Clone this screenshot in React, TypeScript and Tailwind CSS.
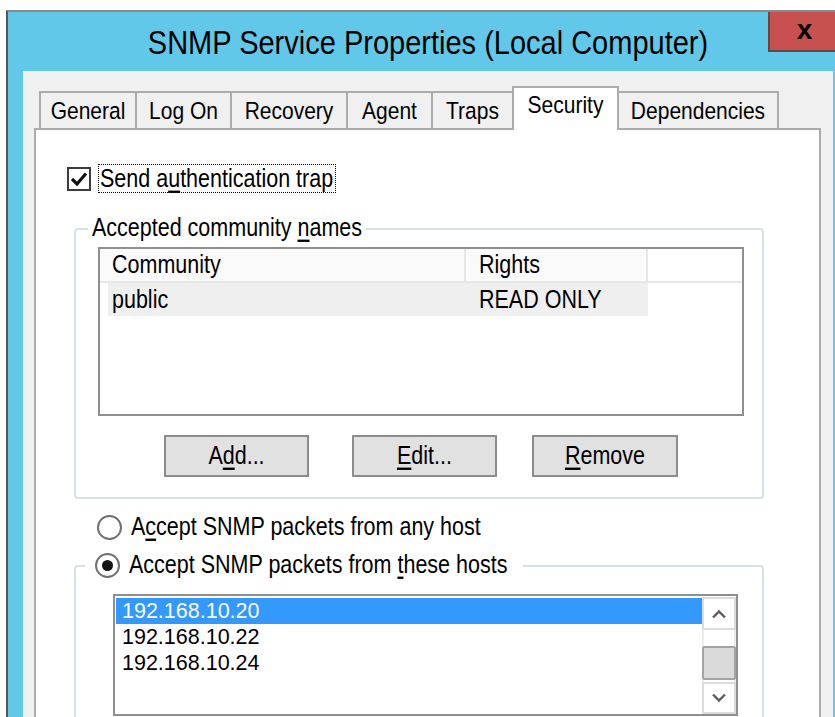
import type { ReactNode } from "react";

// Segoe-style captions render a little taller than Arial at the same width
function Tall({ children, className = "" }: { children: ReactNode; className?: string }) {
  return (
    <span className={`inline-block scale-y-[1.16] whitespace-nowrap ${className}`}>{children}</span>
  );
}

const tabs = [
  { label: "General", width: "w-[98px]" },
  { label: "Log On", width: "w-[97px]" },
  { label: "Recovery", width: "w-[118px]" },
  { label: "Agent", width: "w-[87px]" },
  { label: "Traps", width: "w-[83px]" },
  { label: "Security", width: "w-[107px]", active: true },
  { label: "Dependencies", width: "w-[162px]" },
];

const hosts = ["192.168.10.20", "192.168.10.22", "192.168.10.24"];

function Radio({ checked }: { checked?: boolean }) {
  return (
    <div className="flex h-[25px] w-[25px] items-center justify-center rounded-full border-2 border-[#707070] bg-white">
      {checked && <div className="h-[11px] w-[11px] rounded-full bg-[#111]" />}
    </div>
  );
}

function Button({ children, className = "" }: { children: ReactNode; className?: string }) {
  return (
    <div
      className={`flex h-[42px] items-center justify-center border-2 border-[#8c8c8c] bg-[#e1e1e1] ${className}`}
    >
      <Tall>{children}</Tall>
    </div>
  );
}

function Chevron({ up }: { up?: boolean }) {
  return (
    <svg width="16" height="10" viewBox="0 0 16 10">
      <polyline
        points={up ? "2,8.5 8,2.5 14,8.5" : "2,1.5 8,7.5 14,1.5"}
        fill="none"
        stroke="#5e5e5e"
        strokeWidth="2.4"
      />
    </svg>
  );
}

export default function App() {
  return (
    <div className="h-[717px] w-[835px] overflow-hidden bg-white pl-[6px] pt-[10px] font-['Liberation_Sans',Arial,sans-serif] text-[21.5px] leading-[26px] text-black">
      <div className="relative h-[740px] border-l-2 border-t-2 border-l-[#555] border-t-[#8a8a8a] bg-[#62c8e9] pl-[15px] pr-[2px]">
        {/* caption */}
        <div className="flex h-[59px] items-center justify-center">
          <Tall className="text-[29px] leading-[34px]">SNMP Service Properties (Local Computer)</Tall>
        </div>
        <div className="absolute right-0 top-0 flex h-[40px] w-[67px] items-center justify-center border-b-2 border-l-2 border-[#6b4545] bg-[#c75050] pb-[3px] pl-[4px]">
          <span className="text-[28px] font-bold leading-none">x</span>
        </div>

        <div className="h-[680px] bg-[#f0f0f0] pt-[15px]">
          {/* tab strip */}
          <div className="relative z-10 -mb-[2px] ml-[16px] flex h-[44px] items-end">
            {tabs.map((t, i) =>
              t.active ? (
                <div
                  key={t.label}
                  className={`relative z-10 -ml-[2px] flex h-[44px] justify-center border-2 border-b-0 border-[#acacac] bg-white pt-[6px] ${t.width}`}
                >
                  <Tall className="text-[21px] leading-[24px]">{t.label}</Tall>
                </div>
              ) : (
                <div
                  key={t.label}
                  className={`mb-[2px] flex h-[37px] items-center justify-center border-2 border-b-0 border-[#acacac] bg-[#f0f0f0] ${i === 0 ? "" : "-ml-[2px]"} ${t.width}`}
                >
                  <Tall className="text-[21px] leading-[24px]">{t.label}</Tall>
                </div>
              ),
            )}
          </div>

          {/* page */}
          <div className="ml-[11px] mr-[12px] h-[620px] border-2 border-[#acacac] bg-white">
            <div className="ml-[31px] mt-[34px] flex h-[29px] items-center">
              <div className="flex h-[24px] w-[24px] items-center justify-center border-2 border-[#3c3c3c] bg-white">
                <svg width="18" height="16" viewBox="0 0 18 16">
                  <polyline points="2,8 7,13 16,2.5" fill="none" stroke="#111" strokeWidth="3.2" />
                </svg>
              </div>
              <div className="ml-[7px] flex h-[29px] items-center border border-dotted border-black pl-[1px] pr-[2px]">
                <Tall>
                  Send a<u className="underline-offset-[3px]">u</u>thentication trap
                </Tall>
              </div>
            </div>

            {/* community names */}
            <div className="relative ml-[38px] mt-[35px] h-[271px] w-[690px] rounded-[4px] border-2 border-[#d9e1e8] pl-[22px] pt-[17px]">
              <div className="absolute -top-[15px] left-[12px] bg-white px-[4px]">
                <Tall>
                  Accepted community <u className="underline-offset-[3px]">n</u>ames
                </Tall>
              </div>

              <div className="h-[169px] w-[646px] border-2 border-[#8f8f8f] bg-white">
                <div className="flex h-[34px] border-b-2 border-[#e6e6e6]">
                  <div className="flex w-[366px] items-center border-r-2 border-[#e6e6e6] bg-[#fafafa] pl-[12px]">
                    <Tall>Community</Tall>
                  </div>
                  <div className="flex w-[182px] items-center border-r-2 border-[#e6e6e6] bg-[#fafafa] pl-[13px]">
                    <Tall>Rights</Tall>
                  </div>
                </div>
                <div className="ml-[8px] flex h-[33px] w-[540px] items-center bg-[#efefef]">
                  <div className="w-[358px] pl-[4px]">
                    <Tall>public</Tall>
                  </div>
                  <div className="pl-[13px]">
                    <Tall>READ ONLY</Tall>
                  </div>
                </div>
              </div>

              <div className="ml-[66px] mt-[19px] flex">
                <Button className="w-[145px]">
                  A<u className="underline-offset-[3px]">d</u>d...
                </Button>
                <Button className="ml-[43px] w-[145px]">
                  <u className="underline-offset-[3px]">E</u>dit...
                </Button>
                <Button className="ml-[35px] w-[146px]">
                  <u className="underline-offset-[3px]">R</u>emove
                </Button>
              </div>
            </div>

            <div className="ml-[61px] mt-[15px] flex h-[26px] items-center gap-[9px]">
              <Radio />
              <Tall>
                A<u className="underline-offset-[3px]">c</u>cept SNMP packets from any host
              </Tall>
            </div>

            {/* permitted hosts */}
            <div className="relative ml-[38px] mt-[25px] h-[300px] w-[690px] rounded-[4px] border-2 border-[#d9e1e8] pl-[37px] pt-[27px]">
              <div className="absolute -top-[15px] left-[9px] flex h-[26px] items-center gap-[9px] bg-white pl-[10px] pr-[16px]">
                <Radio checked />
                <Tall>
                  Accept SNMP packets from <u className="underline-offset-[3px]">t</u>hese hosts
                </Tall>
              </div>

              <div className="flex h-[122px] w-[625px] border-2 border-[#8f8f8f] bg-white">
                <div className="flex-1 pl-[1px] pt-[2px] text-[21.5px]">
                  {hosts.map((h, i) => (
                    <div
                      key={h}
                      className={`flex h-[26px] items-center pl-[6px] ${i === 0 ? "bg-[#3399ff] text-white" : ""}`}
                    >
                      {h}
                    </div>
                  ))}
                </div>
                <div className="flex w-[34px] flex-col pt-[1px]">
                  <div className="flex h-[33px] items-center justify-center border-2 border-[#dcdcdc] bg-white">
                    <Chevron up />
                  </div>
                  <div className="h-[16px] border-x-2 border-[#ececec]" />
                  <div className="h-[34px] rounded-[2px] border-2 border-[#a3a3a3] bg-[#dadada]" />
                  <div className="h-[2px] border-x-2 border-[#ececec]" />
                  <div className="flex h-[32px] items-center justify-center border-2 border-[#dcdcdc] bg-white">
                    <Chevron />
                  </div>
                </div>
              </div>
            </div>
          </div>
        </div>
      </div>
    </div>
  );
}
